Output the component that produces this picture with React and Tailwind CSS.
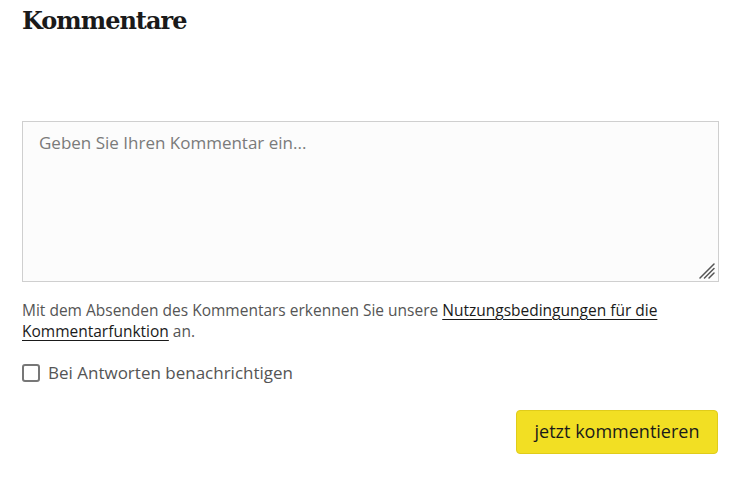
export default function App() {
  return (
    <div className="w-[740px] h-[479px] bg-white px-[22px] pt-[4px] box-border">
      <h2 className="text-[24px] leading-[34px] font-bold text-[#1a1a1a] m-0 tracking-[-1px] font-['DejaVu_Serif','Liberation_Serif',serif]">
        Kommentare
      </h2>
      <div className="mt-[83px] relative">
        <textarea
          className="block w-[697px] h-[161px] border border-[#cfcfcf] bg-[#fcfcfc] px-[16px] py-[9px] text-[17px] leading-[24px] text-[#333] placeholder:text-[#7a7a7a] resize-none outline-none font-['Open_Sans',sans-serif]"
          placeholder="Geben Sie Ihren Kommentar ein..."
        />
        <svg className="absolute right-[3px] bottom-[3px] w-[17px] h-[17px]" viewBox="0 0 17 17">
          <g stroke="#555" strokeWidth="1.5" strokeLinecap="round">
            <line x1="2" y1="16" x2="16" y2="2" />
            <line x1="6.5" y1="16" x2="16" y2="6.5" />
            <line x1="11" y1="16" x2="16" y2="11" />
          </g>
        </svg>
      </div>
      <p className="mt-[18px] text-[15.5px] leading-[21px] text-[#555] m-0 font-['Open_Sans',sans-serif]">
        Mit dem Absenden des Kommentars erkennen Sie unsere{' '}
        <a className="text-[#1a1a1a] underline underline-offset-[3px]">Nutzungsbedingungen für die Kommentarfunktion</a> an.
      </p>
      <label className="mt-[18px] flex items-center gap-[8px] text-[17px] text-[#555] font-['Open_Sans',sans-serif]">
        <span className="w-[18px] h-[18px] border-2 border-[#777] rounded-[3px] bg-white box-border" />
        Bei Antworten benachrichtigen
      </label>
      <div className="flex justify-end mt-[24px]">
        <button className="w-[202px] h-[44px] bg-[#f2df23] border border-[#e0cc1a] rounded-[4px] text-[18px] text-[#1a1a1a] font-['Open_Sans',sans-serif]">
          jetzt kommentieren
        </button>
      </div>
    </div>
  );
}
